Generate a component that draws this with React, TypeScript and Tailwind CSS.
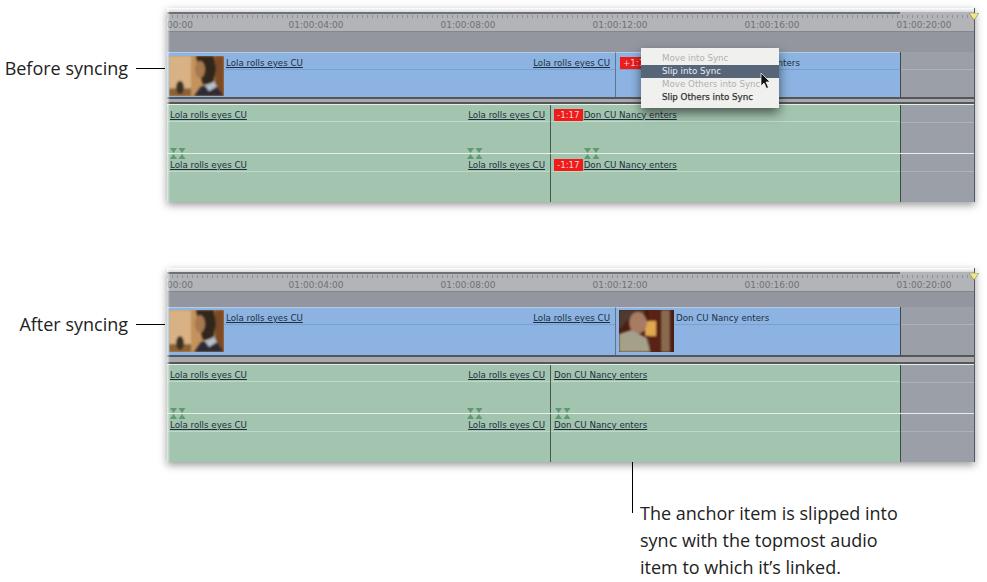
import type { ReactNode } from "react"

const clipText = "font-['DejaVu_Sans',sans-serif] text-[8.7px] leading-none underline text-[#1c2f3f] whitespace-nowrap"
const flagText = "bg-[#f01c1c] px-[3px] font-['DejaVu_Sans',sans-serif] text-[8.7px] leading-[12px] text-[#ffd0d0]"

function Marks({ className }: { className: string }) {
  return (
    <svg width="16" height="11" viewBox="0 0 16 11" className={`absolute bottom-[-6px] z-10 ${className}`}>
      <path d="M0 0h7L3.500 5zM8.500 0h7L12 5z" fill="#5f9a72" />
      <path d="M0 11h7L3.500 6zM8.500 11h7L12 6z" fill="#5f9a72" />
    </svg>
  )
}

function Thumb({ don, className }: { don?: boolean; className: string }) {
  if (don) {
    return (
      <svg viewBox="0 0 55 42" preserveAspectRatio="none" className={`w-[55px] shrink-0 ${className}`}>
        <defs>
          <filter id="soft-don">
            <feGaussianBlur stdDeviation="0.9" />
          </filter>
        </defs>
        <rect width="55" height="42" fill="#4a1e12" />
        <g filter="url(#soft-don)">
          <rect x="42" width="9" height="42" fill="#8a6a50" />
          <rect x="30" y="0" width="10" height="42" fill="#5a2414" />
          <rect x="26" y="11" width="11" height="15" fill="#e0a850" />
          <path d="M0 0h26L24 6 10 8 2 18H0z" fill="#4e3a30" />
          <ellipse cx="19" cy="13" rx="9" ry="11" fill="#a87c64" />
          <path d="M0 42V24l12-4 16 8 3 14z" fill="#a4a08a" />
        </g>
      </svg>
    )
  }
  return (
    <svg viewBox="0 0 55 42" preserveAspectRatio="none" className={`w-[55px] shrink-0 ${className}`}>
      <defs>
        <filter id="soft-lola">
          <feGaussianBlur stdDeviation="0.9" />
        </filter>
      </defs>
      <rect width="55" height="42" fill="#c4925c" />
      <g filter="url(#soft-lola)">
        <rect width="22" height="42" fill="#d8b284" />
        <rect y="34" width="22" height="8" fill="#8a6238" />
        <rect x="46" width="9" height="42" fill="#7a4c28" />
        <ellipse cx="11" cy="33" rx="4" ry="7" fill="#3a3028" />
        <path d="M27 0h18l2 14-3 16H34l-3-10z" fill="#33261c" />
        <ellipse cx="31" cy="14" rx="5" ry="9" fill="#a87850" />
        <path d="M25 42l7-10 14-2 9 12z" fill="#2c2c38" />
        <path d="M36 31l9-4 3 5-8 5z" fill="#b8c0c8" />
      </g>
    </svg>
  )
}

function AudioTrack({ flag, marks, second }: { flag: boolean; marks: boolean; second?: boolean }) {
  return (
    <div className="flex h-[49px] border-t border-[#e4efe8] shadow-[inset_0_-1px_0_#5c6c64]">
      <div className={`relative flex w-[383px] shrink-0 flex-col bg-[#a3c4ae] ${second ? "pt-px" : "pt-0"}`}>
        <div className="flex h-[17px] items-center justify-between border-b border-[#c0d8c8] pl-[3px] pr-[5px] pt-[4px]">
          <span className={clipText}>Lola rolls eyes CU</span>
          <span className={clipText}>Lola rolls eyes CU</span>
        </div>
        {marks && <Marks className="left-[3px]" />}
        {marks && <Marks className="left-[300px]" />}
      </div>
      <div className={`relative flex w-[350px] shrink-0 flex-col border-l border-[#46584e] bg-[#a3c4ae] ${second ? "pt-px" : "pt-0"}`}>
        <div className="flex h-[17px] items-center gap-px border-b border-[#c0d8c8] pl-[3px] pt-[4px]">
          {flag && <span className={flagText}>-1:17</span>}
          <span className={clipText}>Don CU Nancy enters</span>
        </div>
        {marks && <Marks className={flag ? "left-[33px]" : "left-[4px]"} />}
      </div>
      <GrayEnd />
    </div>
  )
}

function GrayEnd() {
  return (
    <div className="flex flex-1 flex-col border-l border-[#3e4a48] bg-[#9a9fa8]">
      <div className="h-[18px] border-b border-[#adb1b8]" />
    </div>
  )
}

const ticks = ["01:00:04:00", "01:00:08:00", "01:00:12:00", "01:00:16:00", "01:00:20:00"]

function Timeline({ synced }: { synced: boolean }) {
  return (
    <div className="relative w-[808px] border-r border-[#55585e] shadow-[0_3px_8px_rgba(0,0,0,0.4)]">
      {/* Ruler */}
      <div className="h-[24px] overflow-hidden border-b border-[#83868c] bg-[#b2b4b8]">
        <div className="h-[4px] bg-gradient-to-b from-white to-[#d8d9db]" />
        <div className="h-[2px] w-[733px] bg-[#6d7076]" />
        <div className="mt-px h-[3px] bg-[repeating-linear-gradient(90deg,#8d9096_0,#8d9096_1px,transparent_1px,transparent_5px)]" />
        <div className="mt-[3px] flex font-['DejaVu_Sans',sans-serif] text-[9px] leading-none text-[#6e7176]">
          <span className="w-[73px] shrink-0">00:00</span>
          {ticks.map((t) => (
            <span key={t} className="w-[152px] shrink-0 text-center">
              {t}
            </span>
          ))}
        </div>
      </div>
      <div className={`${synced ? "h-[15px]" : "h-[20px]"} bg-[#93969e]`} />

      {/* Video track */}
      <div className={`flex ${synced ? "h-[48px]" : "h-[45px]"}`}>
        <div className="flex w-[448px] shrink-0 items-start border-t border-[#b4cce8] bg-[#8cb3e1] pl-[2px]">
          <Thumb className={synced ? "mt-[2px] h-[42px]" : "mt-[3px] h-[40px]"} />
          <VideoLabel>
            <span className={clipText}>Lola rolls eyes CU</span>
            <span className={clipText}>Lola rolls eyes CU</span>
          </VideoLabel>
        </div>
        <div className="flex w-[285px] shrink-0 items-start border-l border-t border-[#5a7690] border-t-[#b4cce8] bg-[#8cb3e1] pl-[3px]">
          {synced ? (
            <>
              <Thumb don className="mt-[2px] h-[42px]" />
              <VideoLabel>
                <span className="font-['DejaVu_Sans',sans-serif] text-[8.7px] leading-none text-[#1c2f3f]">Don CU Nancy enters</span>
              </VideoLabel>
            </>
          ) : (
            <div className="flex h-[17px] flex-1 items-center border-b border-[#78a0d0] pl-px pt-[4px]">
              <span className={flagText}>+1:17</span>
              <span className="ml-[54px] font-['DejaVu_Sans',sans-serif] text-[8.7px] leading-none text-[#1c2f3f]">Don CU Nancy enters</span>
            </div>
          )}
        </div>
        <GrayEnd />
      </div>

      {/* Divider */}
      <div className={`${synced ? "h-[9px]" : "h-[7px]"} border-y-2 border-[#55565a] bg-[#a8aaae]`} />

      <AudioTrack flag={!synced} marks />
      <AudioTrack flag={!synced} marks={false} second />

      {/* Playhead marker */}
      <svg width="10" height="7" viewBox="0 0 10 7" className="absolute right-[-5px] top-[5px] z-10">
        <path d="M0 0h10L5 7z" fill="#f0e68a" stroke="#77703c" strokeWidth="0.5" />
      </svg>

      {/* Soft left edge */}
      <div className="absolute inset-y-0 left-0 w-[3px] bg-gradient-to-r from-white/70 to-transparent" />

      {!synced && <SyncMenu />}
    </div>
  )
}

function VideoLabel({ children }: { children: ReactNode }) {
  return <div className="flex h-[17px] flex-1 items-center justify-between border-b border-[#78a0d0] pl-[2px] pr-[5px] pt-[4px]">{children}</div>
}

function SyncMenu() {
  return (
    <div className="absolute left-[474px] top-[40px] z-20 w-[138px] bg-[#f0f0ee] py-[4px] font-['DejaVu_Sans',sans-serif] text-[8.7px] leading-none shadow-[0_5px_10px_rgba(0,0,0,0.55)]">
      <div className="flex h-[13px] items-center pl-[21px] text-[#b0b0b0]">Move into Sync</div>
      <div className="flex h-[13px] items-center bg-[#576579] pl-[21px] text-[#e8ecf2]">Slip into Sync</div>
      <div className="flex h-[13px] items-center pl-[21px] text-[#b0b0b0]">Move Others into Sync</div>
      <div className="flex h-[13px] items-center pl-[21px] text-[#333] [-webkit-text-stroke:0.25px_#333]">Slip Others into Sync</div>
      <svg width="12" height="18" viewBox="0 0 12 18" className="absolute left-[119px] top-[24px]">
        <path d="M1 1v13l3-3 2.500 5.500 2-1L6 10h4z" fill="#111" stroke="#fff" strokeWidth="0.7" />
      </svg>
    </div>
  )
}

function Row({ label, labelClass, children, className }: { label: string; labelClass: string; children: ReactNode; className: string }) {
  return (
    <div className={`flex ${className}`}>
      <div className={`flex h-[20px] w-[167px] shrink-0 items-center justify-end gap-[8px] pr-[2px] font-['Open_Sans',sans-serif] text-[18px] leading-none text-[#222] ${labelClass}`}>
        <span className="whitespace-nowrap">{label}</span>
        <span className="h-px w-[29px] shrink-0 bg-black" />
      </div>
      {children}
    </div>
  )
}

export default function App() {
  return (
    <div className="h-[582px] w-[987px] overflow-hidden bg-white">
      <Row label="Before syncing" labelClass="mt-[50px]" className="pt-[8px]">
        <Timeline synced={false} />
      </Row>
      <Row label="After syncing" labelClass="mt-[46px]" className="mt-[66px]">
        <Timeline synced />
      </Row>
      <div className="ml-[632px] flex">
        <div className="h-[51px] w-px bg-black" />
        <p className="mt-[38px] whitespace-nowrap pl-[7px] font-['Open_Sans',sans-serif] text-[18px] leading-[27px] text-[#222]">
          The anchor item is slipped into
          <br />
          sync with the topmost audio
          <br />
          item to which it’s linked.
        </p>
      </div>
    </div>
  )
}
